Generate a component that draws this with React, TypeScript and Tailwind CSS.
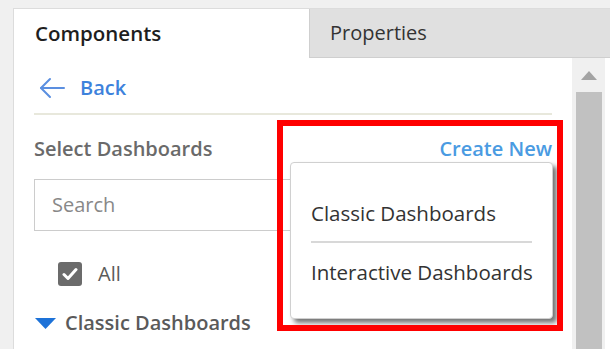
import React from 'react';

const font = { fontFamily: '"Open Sans", "Noto Sans", sans-serif' };

function BackArrow() {
  return (
    <svg width="28" height="22" viewBox="0 0 28 22" fill="none" stroke="#5b8fe0" strokeWidth="2" strokeLinecap="round" strokeLinejoin="round">
      <path d="M26 11H3" />
      <path d="M12 2L3 11l9 9" />
    </svg>
  );
}

function CheckBox() {
  return (
    <span className="w-6 h-6 rounded-[3px] bg-[#6b6b6b] flex items-center justify-center">
      <svg width="16" height="14" viewBox="0 0 16 14" fill="none" stroke="white" strokeWidth="3" strokeLinecap="round" strokeLinejoin="round">
        <path d="M2 7.5l4 4L14 2.5" />
      </svg>
    </span>
  );
}

export default function App() {
  return (
    <div className="w-[610px] h-[349px] bg-[#f0f0f0] pt-2 pl-[13px] overflow-hidden relative" style={font}>
      <div className="h-full flex flex-col bg-white border-l border-t border-[#dcdcdc]">
        {/* Tabs */}
        <div className="h-[49px] flex shrink-0">
          <div className="w-[295px] flex items-center pl-[21px] text-[20.5px] font-semibold text-[#1e1e1e]">
            Components
          </div>
          <div className="flex-1 flex items-center pl-[20px] bg-[#e0e0e0] border-l border-b border-[#cfcfcf] text-[20px] text-[#333]">
            Properties
          </div>
        </div>

        <div className="flex-1 flex min-h-0">
          {/* Content */}
          <div className="flex-1 pl-5 pr-5 flex flex-col">
            <div className="h-[57px] flex items-center gap-[14px] border-b-2 border-[#e8e8dc] pl-1 pt-1">
              <BackArrow />
              <span className="text-[20px] font-semibold text-[#3d82dc]">Back</span>
            </div>
            <div className="h-[64px] flex items-center justify-between pt-1">
              <span className="text-[20px] font-semibold text-[#6a6a6a]">Select Dashboards</span>
              <span className="text-[20px] font-semibold text-[#4a9be2]">Create New</span>
            </div>
            <div className="h-[52px] border border-[#cccccc] flex items-center pl-[17px] text-[20px] text-[#888]">
              Search
            </div>
            <div className="h-[65px] flex items-center gap-4 pl-6 pt-[21px]">
              <CheckBox />
              <span className="text-[20px] text-[#5a5a5a]">All</span>
            </div>
            <div className="flex items-center gap-[9px] pl-[1px] pt-[12px]">
              <svg width="21" height="11" viewBox="0 0 21 11">
                <path d="M0 0h21L10.5 11z" fill="#1d72d8" />
              </svg>
              <span className="text-[20px] font-semibold text-[#5a5a5a]">Classic Dashboards</span>
            </div>
          </div>

          {/* Scrollbar */}
          <div className="w-[33px] bg-[#f0f0f0] flex flex-col items-center shrink-0">
            <div className="h-[34px] flex items-center justify-center">
              <svg width="16" height="9" viewBox="0 0 16 9">
                <path d="M0 9h16L8 0z" fill="#a3a3a3" />
              </svg>
            </div>
            <div className="flex-1 w-[26px] bg-[#c1c1c1]" />
          </div>
          <div className="w-[5px] bg-white shrink-0" />
        </div>
      </div>

      {/* Dropdown menu */}
      <div className="absolute left-[290px] top-[162px] w-[263px] h-[157px] bg-white border border-[#d0d0d0] rounded-[4px] shadow-[4px_4px_5px_rgba(0,0,0,0.55)] flex flex-col pl-5 pr-5 pt-[35px]">
        <div className="text-[20.5px] text-[#333] leading-[30px] whitespace-nowrap">Classic Dashboards</div>
        <div className="h-[2px] bg-[#d8d8d8] mt-[13px] mb-[14px]" />
        <div className="text-[20.5px] text-[#333] leading-[30px] whitespace-nowrap">Interactive Dashboards</div>
      </div>

      {/* Highlight annotation */}
      <div className="absolute left-[277px] top-[120px] w-[286px] h-[211px] border-[6px] border-[#ff0000] pointer-events-none" />
    </div>
  );
}
